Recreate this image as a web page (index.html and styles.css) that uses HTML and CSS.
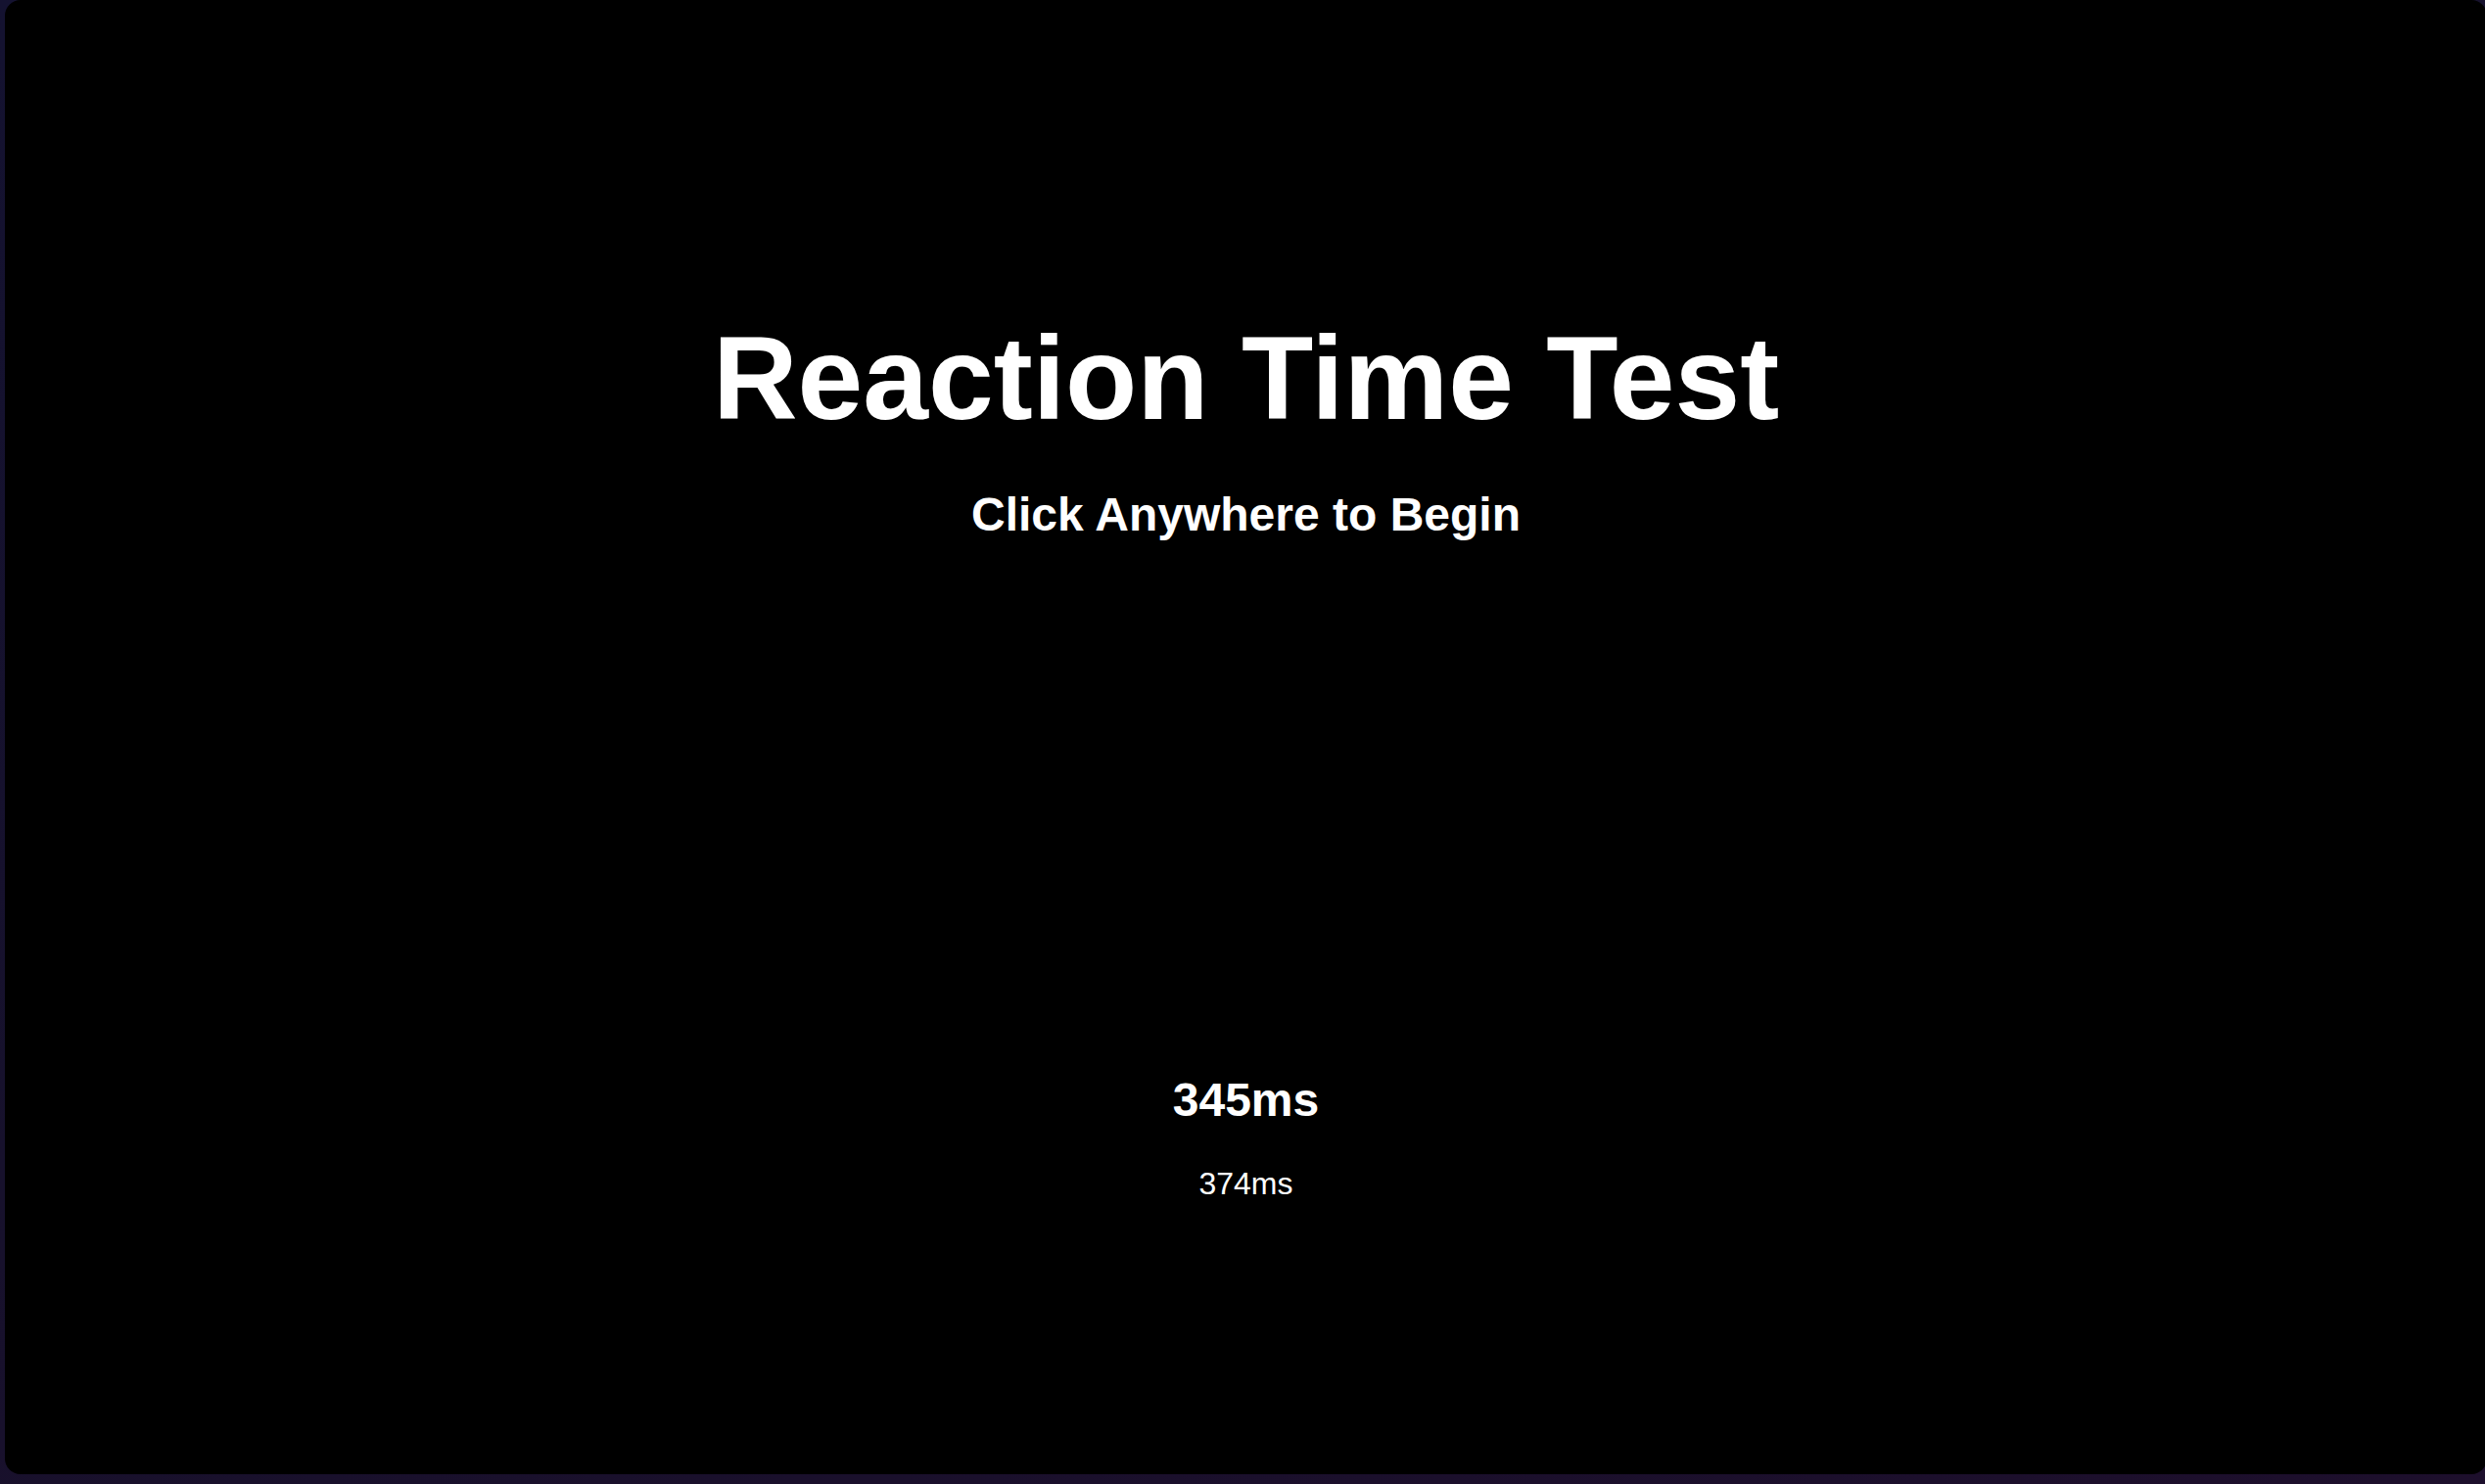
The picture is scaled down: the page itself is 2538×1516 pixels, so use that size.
FILE: index.html
```html
<!DOCTYPE html>
<html lang="en">
<head>
<meta charset="utf-8">
<title>Reaction Time Test</title>
<link rel="stylesheet" href="styles.css">
</head>
<body>
  <main class="screen">
    <header class="intro">
      <h1 class="title">Reaction Time Test</h1>
      <p class="subtitle">Click Anywhere to Begin</p>
    </header>
    <section class="results">
      <div class="result-latest">345ms</div>
      <div class="result-prev">374ms</div>
    </section>
  </main>
</body>
</html>
```

FILE: styles.css
```css
html, body {
  margin: 0;
  height: 100%;
  overflow: hidden;
}

body {
  background: linear-gradient(160deg, #141230 0%, #17112c 50%, #1d0f2c 100%);
  padding: 0 0 10px 5px;
  box-sizing: border-box;
  font-family: "Liberation Sans", Arial, sans-serif;
  color: #ffffff;
}

.screen {
  width: 2535px;
  height: 1506px;
  background: #000000;
  border-radius: 16px;
  display: flex;
  flex-direction: column;
  align-items: center;
  padding-top: 326px;
  box-sizing: border-box;
}

.intro {
  display: flex;
  flex-direction: column;
  align-items: center;
}

.title {
  margin: 0;
  font-size: 120px;
  line-height: 1;
  font-weight: 700;
}

.subtitle {
  margin: 56px 0 0;
  font-size: 48px;
  line-height: 1;
  font-weight: 700;
}

.results {
  margin-top: 550px;
  display: flex;
  flex-direction: column;
  align-items: center;
  gap: 45px;
}

.result-latest {
  font-size: 48px;
  line-height: 1;
  font-weight: 700;
}

.result-prev {
  font-size: 32px;
  line-height: 1;
  font-weight: 400;
}
```
